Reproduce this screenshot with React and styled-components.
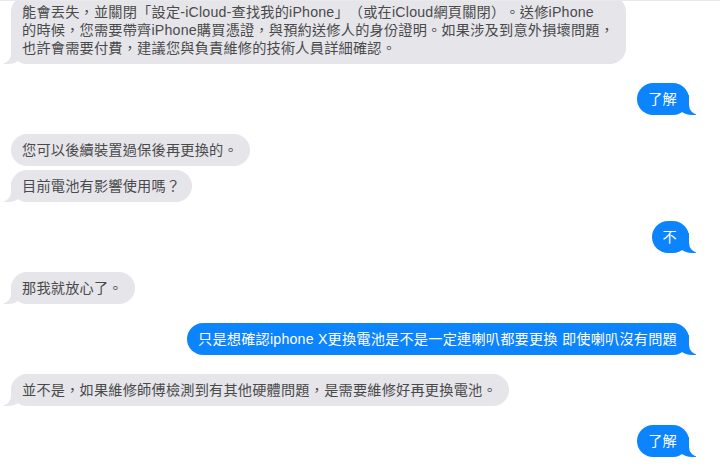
import React from 'react';
import styled, { createGlobalStyle, css } from 'styled-components';

const GlobalStyle = createGlobalStyle`
  html, body {
    margin: 0;
    padding: 0;
    background: #ffffff;
  }
  body {
    font-family: 'Liberation Sans', 'Noto Sans CJK TC', sans-serif;
    text-spacing-trim: space-all;
  }
`;

const Window = styled.div`
  width: 720px;
  height: 476px;
  overflow: hidden;
  border-top: 1px solid #e9e9ec;
  box-sizing: border-box;
  background: #fff;
`;

const Thread = styled.div`
  display: flex;
  flex-direction: column;
  margin-top: -5px;
  padding: 0 31px 0 11px;
`;

const Group = styled.div`
  display: flex;
  flex-direction: column;
  align-items: ${({ $me }) => ($me ? 'flex-end' : 'flex-start')};
  gap: 4px;
  margin-bottom: 19px;
`;

const tailThem = css`
  &::before {
    content: '';
    position: absolute;
    bottom: 0;
    left: -7px;
    width: 20px;
    height: 20px;
    background: #e5e5ea;
    border-bottom-right-radius: 16px 14px;
  }
  &::after {
    content: '';
    position: absolute;
    bottom: 0;
    left: -26px;
    width: 26px;
    height: 22px;
    background: #fff;
    border-bottom-right-radius: 10px;
  }
`;

const tailMe = css`
  &::before {
    content: '';
    position: absolute;
    bottom: 0;
    right: -7px;
    width: 20px;
    height: 20px;
    background: #0b84fe;
    border-bottom-left-radius: 16px 14px;
  }
  &::after {
    content: '';
    position: absolute;
    bottom: 0;
    right: -26px;
    width: 26px;
    height: 22px;
    background: #fff;
    border-bottom-left-radius: 10px;
  }
`;

const Bubble = styled.div`
  position: relative;
  padding: 7px 12px 7px 11px;
  border-radius: 16px;
  font-size: 14.2px;
  line-height: 18px;
  letter-spacing: 0.2px;
  white-space: nowrap;
  text-spacing-trim: space-all;
  background: ${({ $me }) => ($me ? '#0b84fe' : '#e5e5ea')};
  color: ${({ $me }) => ($me ? '#ffffff' : '#4a4a4a')};
  ${({ $tail, $me }) => $tail && ($me ? tailMe : tailThem)}
`;

const Text = styled.span`
  position: relative;
  z-index: 1;
`;

const messages = [
  {
    me: false,
    items: [
      [
        '能會丟失，並關閉「設定-iCloud-查找我的iPhone」（或在iCloud網頁關閉）。送修iPhone',
        '的時候，您需要帶齊iPhone購買憑證，與預約送修人的身份證明。如果涉及到意外損壞問題，',
        '也許會需要付費，建議您與負責維修的技術人員詳細確認。',
      ],
    ],
  },
  { me: true, items: [['了解']] },
  { me: false, items: [['您可以後續裝置過保後再更換的。'], ['目前電池有影響使用嗎？']] },
  { me: true, items: [['不']] },
  { me: false, items: [['那我就放心了。']] },
  { me: true, items: [['只是想確認iphone X更換電池是不是一定連喇叭都要更換 即使喇叭沒有問題']] },
  { me: false, items: [['並不是，如果維修師傅檢測到有其他硬體問題，是需要維修好再更換電池。']] },
  { me: true, items: [['了解']] },
];

const App = () => (
  <>
    <GlobalStyle />
    <Window>
      <Thread>
        {messages.map((group, gi) => (
          <Group key={gi} $me={group.me}>
            {group.items.map((lines, i) => (
              <Bubble key={i} $me={group.me} $tail={i === group.items.length - 1}>
                <Text>
                  {lines.map((line, li) => (
                    <React.Fragment key={li}>
                      {li > 0 && <br />}
                      {line}
                    </React.Fragment>
                  ))}
                </Text>
              </Bubble>
            ))}
          </Group>
        ))}
      </Thread>
    </Window>
  </>
);

export default App;
